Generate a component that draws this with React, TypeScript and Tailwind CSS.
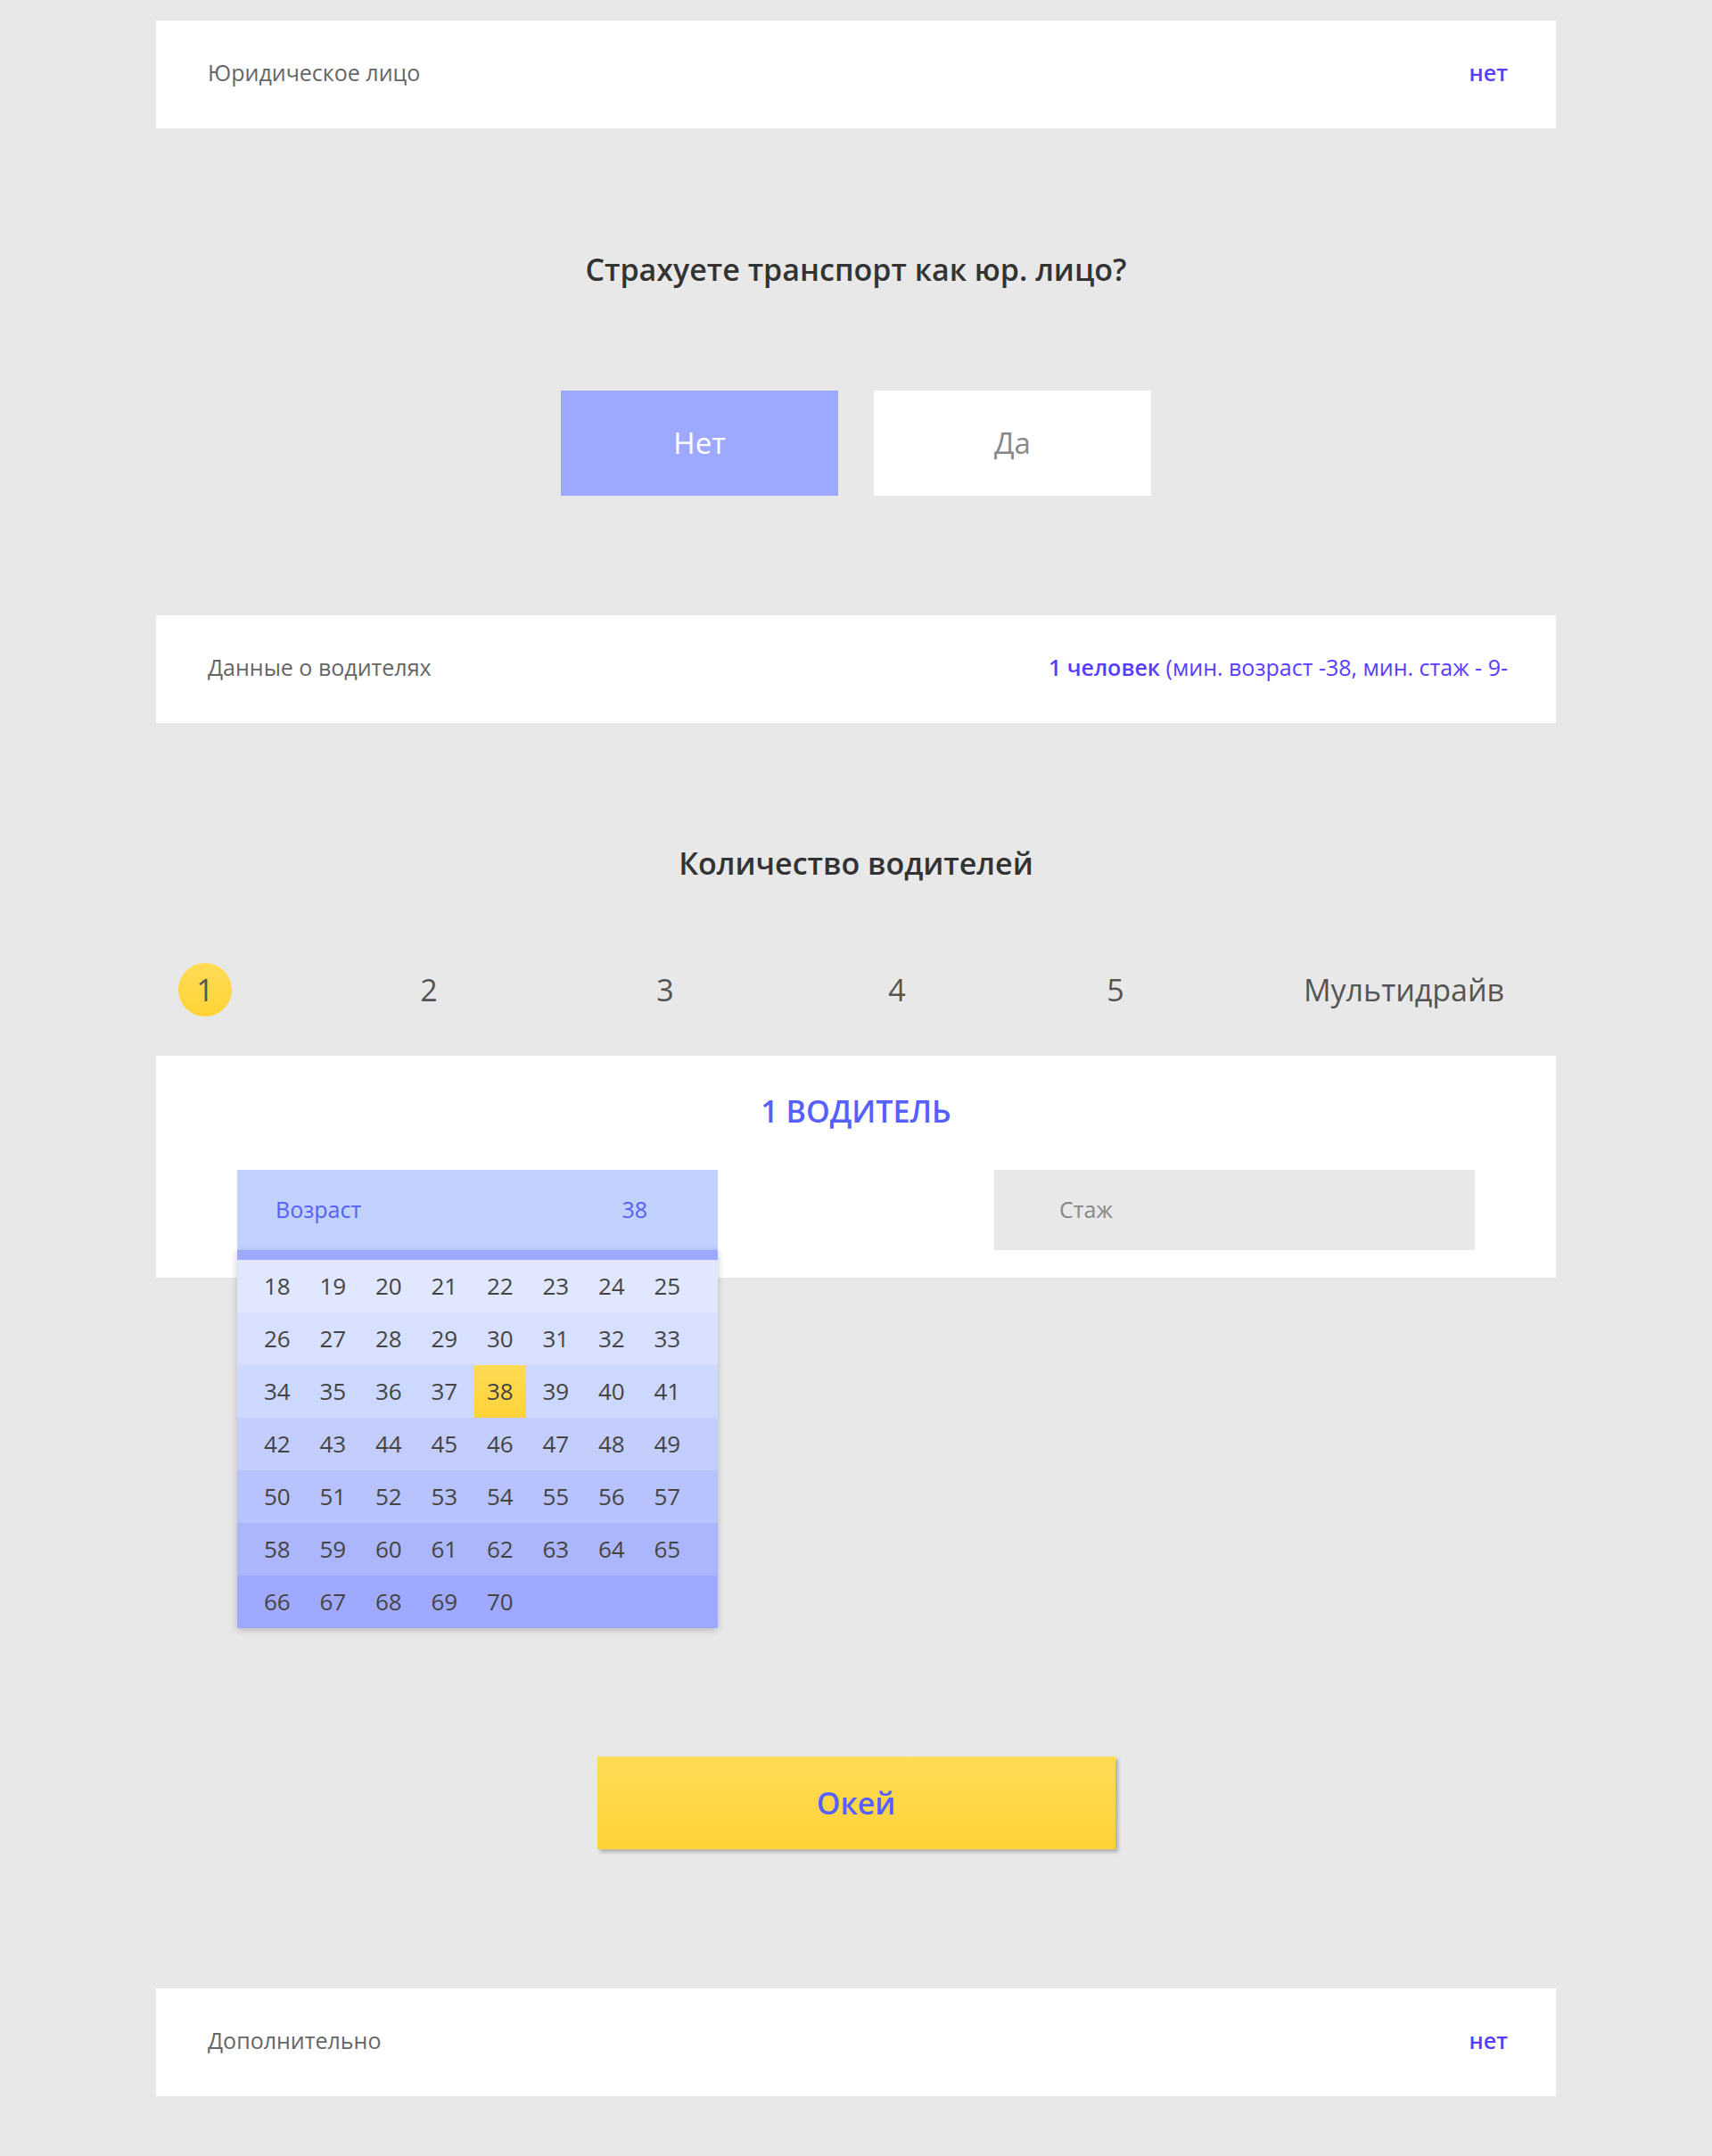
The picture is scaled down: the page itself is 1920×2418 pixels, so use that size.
const AGES = Array.from({ length: 53 }, (_, i) => 18 + i)

const ROW_BG = [
  'bg-[#e0e7fe]',
  'bg-[#d7e0fe]',
  'bg-[#cdd8fe]',
  'bg-[#c3cefd]',
  'bg-[#b8c3fd]',
  'bg-[#abb6fd]',
  'bg-[#9fa9fd]',
]

function InfoRow({ label, children }: { label: string; children: React.ReactNode }) {
  return (
    <div className="bg-white h-[121px] flex items-center justify-between pl-[58px] pr-[54px] pb-[4px]">
      <span className="text-[25px] text-[#666]">{label}</span>
      <span className="text-[25px] text-[#5a3cff]">{children}</span>
    </div>
  )
}

function AgeSelect() {
  const rows: number[][] = []
  for (let i = 0; i < AGES.length; i += 8) rows.push(AGES.slice(i, i + 8))
  return (
    <div className="relative w-[539px]">
      <div className="h-[90px] bg-[#c2d1fd] flex items-center justify-between pl-[43px] pr-[79px] text-[25px] text-[#5560f5]">
        <span>Возраст</span>
        <span>38</span>
      </div>
      <div className="absolute top-full left-0 w-full z-10 shadow-[0_2px_8px_rgba(0,0,0,0.22)]">
        <div className="h-[11px] bg-[#9da8fe]" />
        {rows.map((row, r) => (
          <div key={r} className={`h-[59px] grid grid-cols-[repeat(8,62.5px)] pl-[16px] ${ROW_BG[r]}`}>
            {row.map((n) => (
              <div
                key={n}
                className={`flex items-center pl-[14px] text-[26px] text-[#444] ${
                  n === 38 ? 'w-[58px] bg-gradient-to-b from-[#ffdc55] to-[#ffd236]' : ''
                }`}
              >
                {n}
              </div>
            ))}
          </div>
        ))}
      </div>
    </div>
  )
}

export default function App() {
  return (
    <div className="min-h-[2418px] bg-[#e8e8e8] pt-[23px] font-['Open_Sans',sans-serif]">
      <div className="w-[1570px] mx-auto">
        <InfoRow label="Юридическое лицо">
          <span className="font-semibold">нет</span>
        </InfoRow>

        <h2 className="mt-[134px] h-[48px] leading-[48px] text-center text-[34px] font-semibold text-[#333]">
          Страхуете транспорт как юр. лицо?
        </h2>

        <div className="mt-[112px] flex justify-center gap-[40px]">
          <button className="w-[311px] h-[118px] bg-[#9da8ff] text-white text-[33px]">Нет</button>
          <button className="w-[311px] h-[118px] bg-white text-[#888] text-[33px]">Да</button>
        </div>

        <div className="mt-[134px]">
          <InfoRow label="Данные о водителях">
            <span className="font-semibold">1 человек</span> (мин. возраст -38, мин. стаж - 9-
          </InfoRow>
        </div>

        <h2 className="mt-[133px] h-[48px] leading-[48px] text-center text-[34px] font-semibold text-[#333]">
          Количество водителей
        </h2>

        <div className="mt-[88px] h-[60px] flex items-center pl-[25px] text-[34px] text-[#555]">
          <div className="w-[60px] h-[60px] rounded-full bg-gradient-to-b from-[#ffdc55] to-[#ffd236] flex items-center justify-center">
            1
          </div>
          <div className="ml-[191px] w-[60px] text-center">2</div>
          <div className="ml-[205px] w-[60px] text-center">3</div>
          <div className="ml-[200px] w-[60px] text-center">4</div>
          <div className="ml-[185px] w-[60px] text-center">5</div>
          <div className="ml-[181px]">Мультидрайв</div>
        </div>

        <div className="mt-[44px] bg-white h-[249px] pt-[38px] px-[91px]">
          <h3 className="h-[48px] leading-[48px] text-center text-[34px] font-semibold text-[#5560ff]">
            1 ВОДИТЕЛЬ
          </h3>
          <div className="mt-[42px] flex justify-between">
            <AgeSelect />
            <div className="w-[539px] h-[90px] bg-[#e8e8e8] flex items-center pl-[73px] text-[25px] text-[#888]">
              Стаж
            </div>
          </div>
        </div>

        <div className="mt-[537px] flex justify-center">
          <button className="w-[581px] h-[104px] bg-gradient-to-b from-[#ffdc55] to-[#ffd236] shadow-[3px_3px_4px_rgba(0,0,0,0.25)] text-[34px] font-semibold text-[#5560ff]">
            Окей
          </button>
        </div>

        <div className="mt-[156px]">
          <InfoRow label="Дополнительно">
            <span className="font-semibold">нет</span>
          </InfoRow>
        </div>
      </div>
    </div>
  )
}
